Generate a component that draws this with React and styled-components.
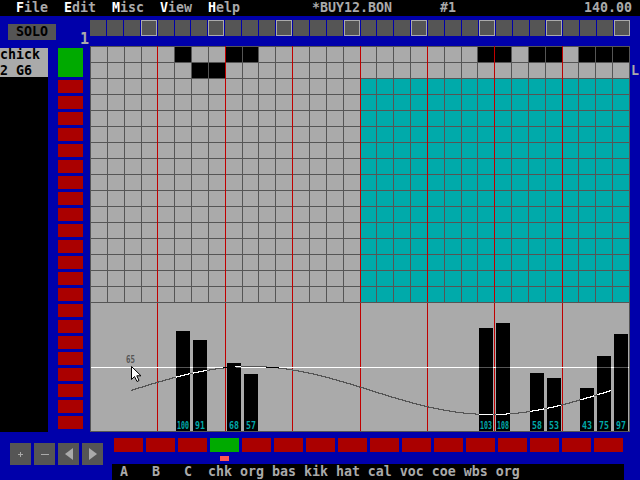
import React from 'react';
import styled, { createGlobalStyle } from 'styled-components';

// DOS text-mode palette
const BLUE = '#0000aa';
const GRAY = '#aaaaaa';
const DARK = '#555555';
const TEAL = '#00aaaa';
const RED = '#aa0000';
const GREEN = '#00aa00';
const BEAT = '#c00000';

const COLS = 32;
const ROWS = 16;
const PITCH = 538 / COLS + 0.03125; // cell + gap, matches the css grid below

const hits = { 0: [5, 8, 9, 23, 24, 26, 27, 29, 30, 31], 1: [6, 7] };
const velocities = [
  [5, 100], [6, 91], [8, 68], [9, 57], [23, 103], [24, 108],
  [26, 58], [27, 53], [29, 43], [30, 75], [31, 97],
];

const GlobalStyle = createGlobalStyle`
  html, body { margin: 0; padding: 0; background: ${BLUE}; }
  body { font-family: "DejaVu Sans Mono", "Liberation Mono", monospace; }
`;

const Screen = styled.div`
  position: relative;
  width: 640px;
  height: 480px;
  background: ${BLUE};
  color: ${GRAY};
  font-size: 13.29px;
  font-weight: bold;
  line-height: 16px;
  display: flex;
  flex-direction: column;
  overflow: hidden;
`;

/* ---------- menu ---------- */
const MenuBar = styled.div`
  height: 16px;
  background: #000;
  display: flex;
  white-space: pre;
`;

const Menus = styled.div`
  display: flex;
  gap: 16px;
  padding-left: 16px;
`;

const Hot = styled.span`
  color: #fff;
`;

const MenuText = styled.span`
  margin-left: ${(p) => p.$offset || 0}px;
`;

const Tempo = styled.span`
  margin-left: auto;
  padding-right: 8px;
`;

/* ---------- body ---------- */
const Body = styled.div`
  display: flex;
  height: 416px;
`;

const LeftCol = styled.div`
  width: 58px;
  display: flex;
  flex-direction: column;
`;

const SoloButton = styled.div`
  margin: 8px 0 8px 8px;
  width: 48px;
  height: 16px;
  background: ${DARK};
  color: #000;
  text-align: center;
`;

const InstrumentPanel = styled.div`
  width: 48px;
  height: 29px;
  background: ${GRAY};
  color: #000;
  overflow: hidden;
  white-space: pre;
  & > div:first-child { margin-top: -1px; }
`;

const BlackFill = styled.div`
  width: 48px;
  flex: 1;
  background: #000;
`;

const ChannelCol = styled.div`
  width: 25px;
  margin-right: 7px;
  display: flex;
  flex-direction: column;
`;

const ChannelHeader = styled.div`
  height: 32px;
  box-sizing: border-box;
  padding: 15px 0 0 22px;
  color: ${GRAY};
  font-size: 15px;
  white-space: nowrap;
`;

const ChannelList = styled.div`
  display: flex;
  flex-direction: column;
  gap: 3px;
`;

const ChannelBox = styled.div`
  height: ${(p) => (p.$current ? 29 : 13)}px;
  background: ${(p) => (p.$current ? GREEN : RED)};
`;

const Editor = styled.div`
  width: 540px;
  display: flex;
  flex-direction: column;
`;

const SliderStrip = styled.div`
  margin-top: 4px;
  height: 16px;
  display: grid;
  grid-template-columns: repeat(${COLS}, 1fr);
  column-gap: 1px;
`;

const Slider = styled.div`
  background: ${DARK};
  box-sizing: border-box;
  border: ${(p) => (p.$marked ? `1px solid ${GRAY}` : 'none')};
`;

const PatternGrid = styled.div`
  margin-top: 10px;
  height: 256px;
  box-sizing: border-box;
  background: ${DARK};
  padding: 1px 1px 0 1px;
  display: grid;
  grid-template-columns: repeat(${COLS}, 1fr);
  grid-template-rows: repeat(${ROWS}, 15px);
  gap: 1px;
`;

const cellColor = { on: '#000', off: GRAY, sel: TEAL };

const Cell = styled.div`
  position: relative;
  background: ${(p) => cellColor[p.$state]};
  &::before {
    content: '';
    display: ${(p) => (p.$beat ? 'block' : 'none')};
    position: absolute;
    left: -1px;
    top: -1px;
    bottom: 0;
    width: 1px;
    background: ${BEAT};
  }
`;

const VelocityPane = styled.div`
  height: 130px;
  box-sizing: border-box;
  border: 1px solid ${DARK};
  background: ${GRAY};
  svg { display: block; }
`;

const Gutter = styled.div`
  width: 10px;
  box-sizing: border-box;
  padding: 47px 0 0 1px;
  overflow: visible;
`;

/* ---------- bottom ---------- */
const Bottom = styled.div`
  height: 48px;
  display: flex;
`;

const ButtonGroup = styled.div`
  display: flex;
  gap: 3px;
  margin: 11px 0 0 10px;
  align-self: flex-start;
`;

const ToolButton = styled.div`
  width: 21px;
  height: 22px;
  background: ${DARK};
  display: flex;
  align-items: center;
  justify-content: center;
  svg { display: block; }
`;

const PatternCol = styled.div`
  width: 512px;
  margin-left: 9px;
  display: flex;
  flex-direction: column;
`;

const SlotRow = styled.div`
  display: flex;
  gap: 3px;
  padding-left: 2px;
  margin-top: ${(p) => p.$top}px;
  height: ${(p) => p.$height}px;
`;

const PatternBox = styled.div`
  width: 29px;
  height: 14px;
  background: ${(p) => (p.$active ? GREEN : RED)};
`;

const Slot = styled.div`
  width: 29px;
  display: flex;
  justify-content: center;
`;

const Marker = styled.div`
  width: 9px;
  height: 5px;
  background: #ff5555;
`;

const NameStrip = styled.div`
  margin-top: auto;
  height: 16px;
  background: #000;
  white-space: pre;
`;

const Cursor = styled.svg`
  position: absolute;
  left: 130px;
  top: 365px;
`;

function VelocityChart() {
  const W = 538;
  const H = 128;
  const lineY = 64;
  const bars = velocities.map(([col, v]) => ({
    x: Math.round(col * PITCH + 1),
    v,
  }));
  const curve = [];
  for (let x = 40; x <= 520; x++) {
    const y = 87 - 24 * Math.sin((2 * Math.PI * (x - 40)) / 480);
    curve.push(`${x},${Math.round(y) + 0.5}`);
  }
  const pts = curve.join(' ');
  return (
    <svg width={W} height={H} shapeRendering="crispEdges">
      <defs>
        <clipPath id="barClip">
          {bars.map((b) => (
            <rect key={b.x} x={b.x} y={H - b.v} width={14} height={b.v} />
          ))}
        </clipPath>
        <clipPath id="lineClip">
          <rect x={0} y={lineY} width={W} height={1} />
        </clipPath>
      </defs>
      {[1, 2, 3, 4, 5, 6, 7].map((k) => (
        <rect key={k} x={Math.round(4 * k * PITCH - 1)} y={0} width={1} height={H} fill={BEAT} />
      ))}
      <rect x={0} y={lineY} width={W} height={1} fill="#fff" />
      {bars.map((b) => (
        <rect key={b.x} x={b.x} y={H - b.v} width={14} height={b.v} fill="#000" />
      ))}
      <rect x={0} y={lineY} width={W} height={1} fill={DARK} clipPath="url(#barClip)" />
      <polyline points={pts} fill="none" stroke={DARK} strokeWidth={1} />
      <polyline points={pts} fill="none" stroke="#fff" strokeWidth={1} clipPath="url(#barClip)" />
      <polyline points={pts} fill="none" stroke="#000" strokeWidth={1} clipPath="url(#lineClip)" />
      {bars.map((b) => {
        const s = String(b.v);
        return (
          <text
            key={b.x}
            x={b.x + 7}
            y={126}
            fill={TEAL}
            fontFamily="DejaVu Sans Mono, monospace"
            fontSize={10.5}
            textAnchor="middle"
            textLength={s.length === 3 ? 12 : 10}
            lengthAdjust="spacingAndGlyphs"
          >
            {s}
          </text>
        );
      })}
      <text
        x={35}
        y={60}
        fill={DARK}
        fontFamily="DejaVu Sans Mono, monospace"
        fontSize={10}
        textLength={9}
        lengthAdjust="spacingAndGlyphs"
      >
        65
      </text>
    </svg>
  );
}

export default function App() {
  const cells = [];
  for (let r = 0; r < ROWS; r++) {
    for (let c = 0; c < COLS; c++) {
      let state = 'off';
      if (hits[r] && hits[r].includes(c)) state = 'on';
      else if (r >= 2 && c >= 16) state = 'sel';
      cells.push(<Cell key={`${r}-${c}`} $state={state} $beat={c > 0 && c % 4 === 0} />);
    }
  }

  return (
    <>
      <GlobalStyle />
      <Screen>
        <MenuBar>
          <Menus>
            {['File', 'Edit', 'Misc', 'View', 'Help'].map((m) => (
              <span key={m}>
                <Hot>{m[0]}</Hot>
                {m.slice(1)}
              </span>
            ))}
          </Menus>
          <MenuText $offset={72}>*BUY12.BON</MenuText>
          <MenuText $offset={48}>#1</MenuText>
          <Tempo>140.00</Tempo>
        </MenuBar>

        <Body>
          <LeftCol>
            <SoloButton>SOLO</SoloButton>
            <InstrumentPanel>
              <div>chick</div>
              <div>2 G6</div>
            </InstrumentPanel>
            <BlackFill />
          </LeftCol>

          <ChannelCol>
            <ChannelHeader>1</ChannelHeader>
            <ChannelList>
              <ChannelBox $current />
              {Array.from({ length: 22 }, (_, i) => (
                <ChannelBox key={i} />
              ))}
            </ChannelList>
          </ChannelCol>

          <Editor>
            <SliderStrip>
              {Array.from({ length: COLS }, (_, i) => (
                <Slider key={i} $marked={i % 4 === 3} />
              ))}
            </SliderStrip>
            <PatternGrid>{cells}</PatternGrid>
            <VelocityPane>
              <VelocityChart />
            </VelocityPane>
          </Editor>

          <Gutter>L</Gutter>
        </Body>

        <Bottom>
          <ButtonGroup>
            <ToolButton>
              <svg width="5" height="5" shapeRendering="crispEdges">
                <rect x="0" y="2" width="5" height="1" fill={GRAY} />
                <rect x="2" y="0" width="1" height="5" fill={GRAY} />
              </svg>
            </ToolButton>
            <ToolButton>
              <svg width="8" height="1" shapeRendering="crispEdges">
                <rect x="0" y="0" width="8" height="1" fill={GRAY} />
              </svg>
            </ToolButton>
            <ToolButton>
              <svg width="8" height="12">
                <polygon points="8,0 8,12 0,6" fill={GRAY} />
              </svg>
            </ToolButton>
            <ToolButton>
              <svg width="8" height="12">
                <polygon points="0,0 0,12 8,6" fill={GRAY} />
              </svg>
            </ToolButton>
          </ButtonGroup>

          <PatternCol>
            <SlotRow $top={6} $height={14}>
              {Array.from({ length: 16 }, (_, i) => (
                <PatternBox key={i} $active={i === 3} />
              ))}
            </SlotRow>
            <SlotRow $top={4} $height={5}>
              {Array.from({ length: 16 }, (_, i) => (
                <Slot key={i}>{i === 3 && <Marker />}</Slot>
              ))}
            </SlotRow>
            <NameStrip>{' A   B   C  chk org bas kik hat cal voc coe wbs org'}</NameStrip>
          </PatternCol>
        </Bottom>

        <Cursor width="13" height="18" viewBox="0 0 13 18">
          <polygon
            points="1.5,1.5 1.5,14.5 4.5,11.5 7,16.5 9,15.5 6.8,10.8 11,10.8"
            fill="#fff"
            stroke="#000"
            strokeWidth="1"
          />
        </Cursor>
      </Screen>
    </>
  );
}
